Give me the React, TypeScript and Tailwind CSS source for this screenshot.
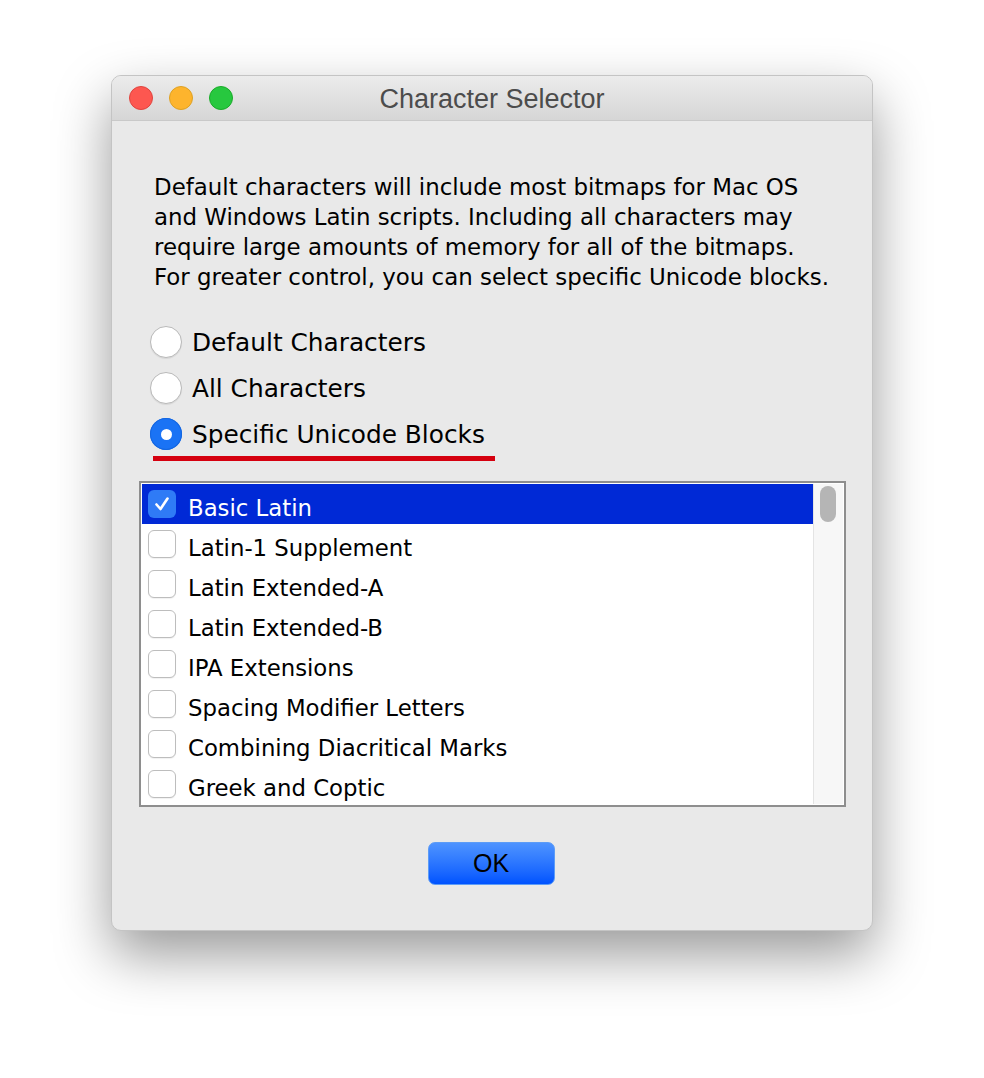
import React from "react";

const blocks = [
  "Basic Latin",
  "Latin-1 Supplement",
  "Latin Extended-A",
  "Latin Extended-B",
  "IPA Extensions",
  "Spacing Modifier Letters",
  "Combining Diacritical Marks",
  "Greek and Coptic",
];

const radios = [
  { label: "Default Characters", on: false },
  { label: "All Characters", on: false },
  { label: "Specific Unicode Blocks", on: true },
];

const Radio = ({ on }: { on: boolean }) =>
  on ? (
    <span className="flex h-[32px] w-[32px] shrink-0 items-center justify-center rounded-full bg-[#1a73f5] shadow-[inset_0_0_0_1px_#1466e0]">
      <span className="h-[11px] w-[11px] rounded-full bg-white" />
    </span>
  ) : (
    <span className="h-[32px] w-[32px] shrink-0 rounded-full border border-[#b9b9b9] bg-white shadow-[0_1px_1px_rgba(0,0,0,0.08)]" />
  );

const Check = ({ on }: { on: boolean }) =>
  on ? (
    <span className="flex h-[28px] w-[28px] shrink-0 items-center justify-center rounded-[6px] bg-[#2f7bf6]">
      <svg width="18" height="18" viewBox="0 0 18 18">
        <path d="M3.5 9.5 L7.5 14 L14.5 3.5" fill="none" stroke="white" strokeWidth="2.6" strokeLinecap="round" strokeLinejoin="round" />
      </svg>
    </span>
  ) : (
    <span className="h-[28px] w-[28px] shrink-0 rounded-[6px] border border-[#bdbdbd] bg-white shadow-[0_1px_1px_rgba(0,0,0,0.06)]" />
  );

export default function App() {
  return (
    <div className="min-h-[1078px] w-[984px] bg-white pl-[111px] pt-[75px]">
      <div className="flex h-[856px] w-[762px] flex-col overflow-hidden rounded-[10px] border border-[#c4c4c4] bg-[#e9e9e9] shadow-[0_24px_55px_rgba(0,0,0,0.4)]">
        {/* title bar */}
        <div className="relative flex h-[45px] shrink-0 items-center border-b border-[#c9c9c9] bg-gradient-to-b from-[#ececec] to-[#d6d6d6] px-[17px]">
          <div className="flex gap-[16px]">
            <span className="h-[24px] w-[24px] rounded-full border border-[#e0443e] bg-[#fd5750]" />
            <span className="h-[24px] w-[24px] rounded-full border border-[#dea123] bg-[#fdb42d]" />
            <span className="h-[24px] w-[24px] rounded-full border border-[#1aab29] bg-[#27c83f]" />
          </div>
          <div className="absolute inset-0 flex items-center justify-center pt-[2px] text-[27px] text-[#4c4c4c] [font-family:'Liberation_Sans',Arial,sans-serif]">
            Character Selector
          </div>
        </div>

        {/* body */}
        <div className="flex flex-1 flex-col px-[27px] pt-[51px] [font-family:'DejaVu_Sans',sans-serif]">
          <p className="whitespace-nowrap pl-[15px] text-[22.9px] leading-[30px] text-black">
            Default characters will include most bitmaps for Mac OS
            <br />
            and Windows Latin scripts. Including all characters may
            <br />
            require large amounts of memory for all of the bitmaps.
            <br />
            For greater control, you can select specific Unicode blocks.
          </p>

          <div className="mt-[27px] flex flex-col pl-[11px]">
            {radios.map((r) => (
              <div key={r.label} className="flex h-[46px] items-center gap-[10px]">
                <Radio on={r.on} />
                <span className="pt-[2px] text-[24.8px] text-black">{r.label}</span>
              </div>
            ))}
          </div>
          <div className="ml-[14px] mt-[-1px] h-[5px] w-[342px] bg-[#d5000f]" />

          {/* list */}
          <div className="mt-[20px] flex h-[326px] w-[707px] border-2 border-[#8e8e8e] bg-white p-[1px]">
            <div className="flex flex-1 flex-col">
              {blocks.map((b, i) => (
                <div
                  key={b}
                  className={`flex h-[40px] shrink-0 items-center gap-[12px] pl-[6px] text-[22.8px] ${
                    i === 0 ? "bg-[#0029d6] text-white" : "text-black"
                  }`}
                >
                  <Check on={i === 0} />
                  <span className="pt-[8px]">{b}</span>
                </div>
              ))}
            </div>
            <div className="w-[30px] border-l border-[#e4e4e4] bg-[#f7f7f7] pl-[6px] pt-[2px]">
              <div className="h-[36px] w-[16px] rounded-full bg-[#b5b5b5]" />
            </div>
          </div>

          {/* ok */}
          <div className="mt-[35px] flex justify-center pr-[2px]">
            <button className="h-[43px] w-[127px] rounded-[7px] border border-[#5c9cf7] bg-gradient-to-b from-[#4e93ff] to-[#0052ff] text-[25px] text-black [font-family:'Liberation_Sans',Arial,sans-serif]">
              OK
            </button>
          </div>
        </div>
      </div>
    </div>
  );
}
